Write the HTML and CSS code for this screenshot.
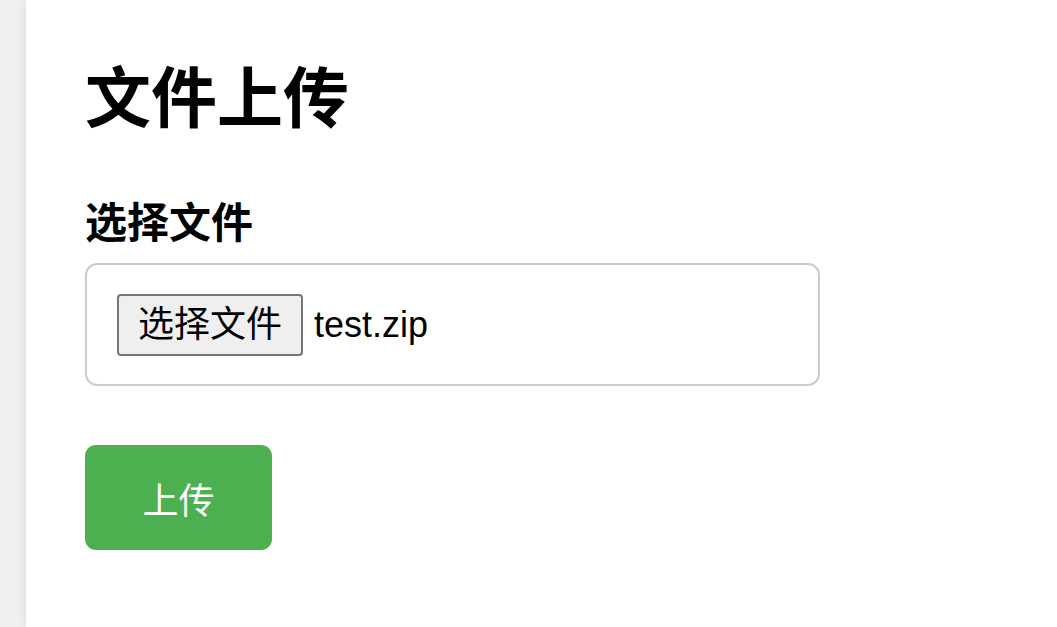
FILE: index.html
```html
<!DOCTYPE html>
<html lang="zh">
<head>
<meta charset="utf-8">
<title>文件上传</title>
<link rel="stylesheet" href="styles.css">
</head>
<body>
<main class="container">
  <h1 class="title">文件上传</h1>
  <form class="upload-form">
    <label class="field-label">选择文件</label>
    <div class="file-box">
      <span class="file-button">选择文件</span>
      <span class="file-name">test.zip</span>
    </div>
    <button type="button" class="submit">上传</button>
  </form>
</main>
</body>
</html>
```

FILE: styles.css
```css
html, body {
  margin: 0;
  padding: 0;
  height: 100%;
}
body {
  background: #f0f0f0;
  font-family: "Liberation Sans", Arial, "Noto Sans CJK SC", sans-serif;
  overflow: hidden;
}
.container {
  margin-left: 26px;
  min-height: 100%;
  background: #ffffff;
  box-shadow: 0 0 10px rgba(0, 0, 0, 0.1);
  padding: 50px 60px 40px 59px;
  box-sizing: border-box;
}
.title {
  margin: 0;
  font-family: "Noto Sans CJK SC", sans-serif;
  font-size: 66px;
  font-weight: 700;
  line-height: 86px;
  color: #000;
}
.upload-form {
  display: flex;
  flex-direction: column;
  align-items: flex-start;
}
.field-label {
  margin-top: 58px;
  font-family: "Noto Sans CJK SC", sans-serif;
  font-size: 42px;
  font-weight: 700;
  line-height: 52px;
  color: #000;
}
.file-box {
  margin-top: 17px;
  box-sizing: border-box;
  width: 735px;
  height: 123px;
  border: 2px solid #cccccc;
  border-radius: 12px;
  padding: 0 29px 0 30px;
  display: flex;
  align-items: center;
}
.file-button {
  box-sizing: border-box;
  height: 62px;
  padding: 0 19px;
  border: 2px solid #767676;
  border-radius: 4px;
  background: #efefef;
  font-family: "Liberation Sans", "Noto Sans CJK SC", sans-serif;
  font-size: 36px;
  line-height: 58px;
  color: #000;
  margin-right: 11px;
  display: flex;
  align-items: center;
}
.file-name {
  font-family: "Liberation Sans", Arial, sans-serif;
  font-size: 36px;
  color: #000;
}
.submit {
  margin-top: 59px;
  width: 187px;
  height: 105px;
  border: none;
  border-radius: 11px;
  background: #4caf50;
  color: #ffffff;
  font-family: "Liberation Sans", "Noto Sans CJK SC", sans-serif;
  font-size: 36px;
  padding: 0;
  cursor: pointer;
}
```
